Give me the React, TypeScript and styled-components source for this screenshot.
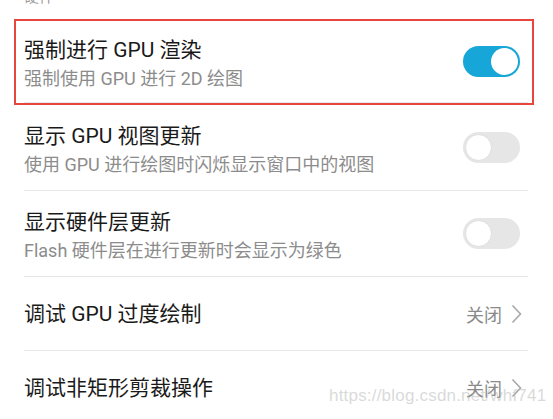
import React from 'react';
import styled, { createGlobalStyle } from 'styled-components';

const GlobalStyle = createGlobalStyle`
    html, body {
        margin: 0;
        padding: 0;
        background: #ffffff;
    }
    body {
        font-family: Roboto, "Noto Sans CJK SC", sans-serif;
        overflow: hidden;
    }
`;

const Page = styled.div`
    position: relative;
    width: 553px;
    height: 419px;
    overflow: hidden;
    background: #ffffff;
`;

const SectionHeader = styled.div`
    margin: -12px 0 0 24px;
    height: 18px;
    line-height: 18px;
    font-size: 15px;
    color: #9a9a9a;
`;

const List = styled.div`
    margin-top: 13px;
    display: flex;
    flex-direction: column;
`;

const Highlight = styled.div`
    margin: 0 19px 0 14px;
    padding: 0 4px 0 8px;
    border: 2px solid #e8453c;
`;

const Row = styled.div<{ $tall?: boolean }>`
    margin: 0 25px 0 24px;
    height: ${(p) => (p.$tall ? '85px' : '73px')};
    display: flex;
    align-items: center;
    justify-content: space-between;
    border-bottom: 1px solid #e6e6e6;
    ${Highlight} & {
        margin: 0;
        height: 81px;
    }
`;

const Texts = styled.div`
    display: flex;
    flex-direction: column;
    padding-top: 5px;
`;

const Title = styled.div`
    font-size: 21px;
    line-height: 28px;
    color: #1a1a1a;
    white-space: pre;
`;

const Subtitle = styled.div`
    font-size: 18px;
    line-height: 29px;
    color: #8c8c8c;
    white-space: pre;
`;

const Track = styled.div<{ $on?: boolean }>`
    position: relative;
    width: 57px;
    height: 31px;
    border-radius: 16px;
    background: ${(p) => (p.$on ? '#17a6d8' : '#e6e6e6')};
    margin-right: 8px;
    flex-shrink: 0;
`;

const Knob = styled.div<{ $on?: boolean }>`
    position: absolute;
    top: 2px;
    left: ${(p) => (p.$on ? '28px' : '2px')};
    width: 27px;
    height: 27px;
    border-radius: 50%;
    background: #ffffff;
    box-sizing: border-box;
    border: ${(p) => (p.$on ? 'none' : '1px solid #dedede')};
`;

const Value = styled.div`
    display: flex;
    align-items: center;
    gap: 9px;
    margin-right: 6px;
    font-size: 18px;
    color: #8a8a8a;
`;

const Watermark = styled.div`
    position: absolute;
    left: 329px;
    top: 386px;
    font-family: "Liberation Sans", Arial, sans-serif;
    font-size: 17px;
    color: rgba(180, 180, 180, 0.5);
    white-space: nowrap;
    letter-spacing: 0.2px;
`;

const Switch: React.FC<{ on?: boolean }> = ({ on }) => (
    <Track $on={on}>
        <Knob $on={on} />
    </Track>
);

const Chevron = () => (
    <svg width="11" height="20" viewBox="0 0 11 20">
        <polyline points="1.5,1.5 9.5,10 1.5,18.5" fill="none" stroke="#a8a8a8" strokeWidth="1.6" />
    </svg>
);

export default function App() {
    return (
        <Page>
            <GlobalStyle />
            <SectionHeader>硬件</SectionHeader>
            <List>
                <Highlight>
                    <Row $tall>
                        <Texts>
                            <Title>强制进行 GPU 渲染</Title>
                            <Subtitle>强制使用 GPU 进行 2D 绘图</Subtitle>
                        </Texts>
                        <Switch on />
                    </Row>
                </Highlight>
                <Row $tall>
                    <Texts>
                        <Title>显示 GPU 视图更新</Title>
                        <Subtitle>使用 GPU 进行绘图时闪烁显示窗口中的视图</Subtitle>
                    </Texts>
                    <Switch />
                </Row>
                <Row $tall>
                    <Texts>
                        <Title>显示硬件层更新</Title>
                        <Subtitle>Flash 硬件层在进行更新时会显示为绿色</Subtitle>
                    </Texts>
                    <Switch />
                </Row>
                <Row>
                    <Title>调试 GPU 过度绘制</Title>
                    <Value>
                        关闭
                        <Chevron />
                    </Value>
                </Row>
                <Row>
                    <Title>调试非矩形剪裁操作</Title>
                    <Value>
                        关闭
                        <Chevron />
                    </Value>
                </Row>
            </List>
            <Watermark>https://blog.csdn.net/whf741</Watermark>
        </Page>
    );
}
